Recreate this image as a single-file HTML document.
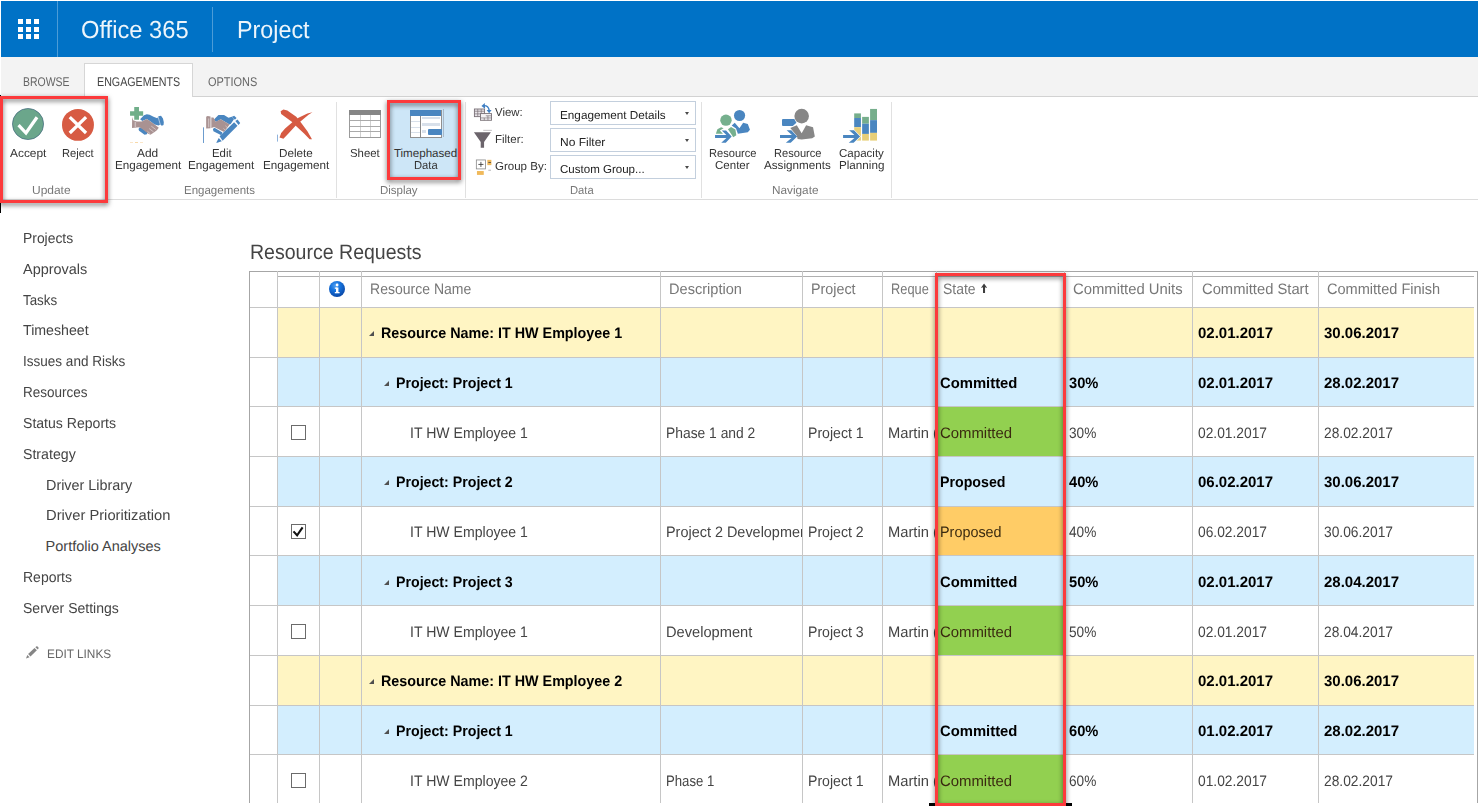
<!DOCTYPE html>
<html lang="en"><head><meta charset="utf-8"><title>Resource Requests</title>
<style>
html,body{margin:0;padding:0;background:#fff}
body{width:1478px;height:806px;position:relative;overflow:hidden;font-family:"Liberation Sans",sans-serif;text-rendering:geometricPrecision}
.a{position:absolute}
.t{position:absolute;white-space:nowrap;line-height:1;transform-origin:0 0}
.c{position:absolute;overflow:hidden}
.vl{position:absolute;width:1px;background:#c6c6c6}
.hl{position:absolute;height:1px;background:#c6c6c6}
.sep{position:absolute;width:1px;background:#e1e1e1;top:102px;height:96px}
.dd{position:absolute;left:550px;width:144px;height:22px;border:1px solid #c3cfdd;background:#fff}
.arr{position:absolute;width:0;height:0;border-left:2.8px solid transparent;border-right:2.8px solid transparent;border-top:3px solid #4a4a4a}
.cb{position:absolute;left:291px;width:13px;height:13px;border:1px solid #6b6b6b;background:#fff}
.tri{position:absolute;width:0;height:0;border-left:5.5px solid transparent;border-bottom:5.5px solid #505050}
.red{position:absolute;border:3px solid #fc3a3c;filter:drop-shadow(0 2px 2.5px rgba(0,0,0,.6))}
</style></head><body>

<div class="a" style="left:1px;top:1px;width:1477px;height:56px;background:#0072c6"></div>
<div class="a" style="left:57px;top:1px;width:1px;height:56px;background:#4c9cd7"></div>
<div class="a" style="left:212px;top:7px;width:1px;height:45px;background:#4c9cd7"></div>
<div class="a" style="left:18.3px;top:19.0px;width:5px;height:5px;background:#fff"></div>
<div class="a" style="left:25.9px;top:19.0px;width:5px;height:5px;background:#fff"></div>
<div class="a" style="left:33.5px;top:19.0px;width:5px;height:5px;background:#fff"></div>
<div class="a" style="left:18.3px;top:26.5px;width:5px;height:5px;background:#fff"></div>
<div class="a" style="left:25.9px;top:26.5px;width:5px;height:5px;background:#fff"></div>
<div class="a" style="left:33.5px;top:26.5px;width:5px;height:5px;background:#fff"></div>
<div class="a" style="left:18.3px;top:34.0px;width:5px;height:5px;background:#fff"></div>
<div class="a" style="left:25.9px;top:34.0px;width:5px;height:5px;background:#fff"></div>
<div class="a" style="left:33.5px;top:34.0px;width:5px;height:5px;background:#fff"></div>
<div class="a" style="left:1px;top:57px;width:1477px;height:40px;background:#f3f3f3"></div>
<div class="a" style="left:0;top:96px;width:1478px;height:1px;background:#d2d2d2"></div>
<div class="a" style="left:84px;top:63px;width:107px;height:33px;background:#fff;border:1px solid #d6d6d6;border-bottom:none"></div>
<div class="a" style="left:0;top:199px;width:1478px;height:1px;background:#dcdcdc"></div>
<div class="sep" style="left:336px"></div>
<div class="sep" style="left:465px"></div>
<div class="sep" style="left:701px"></div>
<div class="sep" style="left:891px"></div>
<div class="a" style="left:389px;top:102px;width:70px;height:76px;background:#cde6f7"></div>
<div class="dd" style="top:101px"></div><div class="arr" style="left:684.7px;top:112px"></div>
<div class="dd" style="top:128px"></div><div class="arr" style="left:684.7px;top:139px"></div>
<div class="dd" style="top:155px"></div><div class="arr" style="left:684.7px;top:166px"></div>
<!-- Accept -->
<svg class="a" style="left:4px;top:100px" width="100" height="50" viewBox="0 0 1478 739">
<circle cx="355" cy="355" r="230" fill="#6ba68b" stroke="#3d647a" stroke-width="10"/>
<path d="M215 372 L325 488 L488 255" fill="none" stroke="#fff" stroke-width="48"/>
<circle cx="1093" cy="368" r="236" fill="#d75b43"/>
<path d="M972 252 L1213 488 M1213 252 L972 488" fill="none" stroke="#fff" stroke-width="48"/>
</svg>
<!-- Add engagement -->
<svg class="a" style="left:120px;top:100px" width="60" height="45" viewBox="0 0 1075 806">
<path d="M360 345 L430 275 L480 255 L530 265 L600 300 L668 328 L690 290 L735 280 L770 330 L785 400 L780 450 L750 462 L720 440 L690 455 L620 440 L560 395 L480 340 L400 378 Z" fill="#4a86c0"/>
<path d="M682 300 L722 442" stroke="#dce8f4" stroke-width="12" fill="none"/>
<path d="M332 520 L352 490 L400 508 L492 580 L482 612 L440 622 L342 552 Z" fill="#4a86c0"/>
<path d="M218 305 L236 362 L300 385 L390 385 L480 340 L560 395 L620 440 L695 495 L660 540 L620 575 L545 622 L500 600 L430 540 L350 490 L300 492 L215 500 Z" fill="#a99292"/>
<path d="M262 390 L288 390 L288 490 L262 490 Z" fill="#cbbcbc"/>
<path d="M560 468 L642 530 M522 512 L602 572 M492 560 L542 606" stroke="#e9e1e1" stroke-width="11" fill="none"/>
<path d="M180 200 H255 V125 H340 V200 H415 V280 H340 V355 H255 V280 H180 Z" fill="#70ae89"/>
</svg>
<!-- Edit engagement -->
<svg class="a" style="left:195px;top:100px" width="60" height="45" viewBox="0 0 1075 806">
<rect x="144" y="490" width="16" height="280" fill="#5a90c8"/>
<path d="M340 350 L420 270 L520 270 L600 320 L660 300 L700 340 L640 430 L620 440 L460 345 L375 392 Z" fill="#4a86c0"/>
<path d="M320 520 L350 495 L492 580 L470 632 L330 560 Z" fill="#4a86c0"/>
<path d="M292 312 L330 312 L370 390 L460 345 L620 440 L520 572 L345 482 L292 500 Z" fill="#a99292"/>
<path d="M200 300 L225 286 L278 296 L278 505 L200 510 Z" fill="#a99292"/>
<path d="M232 330 L256 330 L256 488 L232 488 Z" fill="#cbbcbc"/>
<path d="M545 462 L585 500 M510 510 L548 545" stroke="#e9e1e1" stroke-width="10" fill="none"/>
<path d="M440 650 L700 400 L762 462 L495 732 Z" fill="#4a86c0"/>
<path d="M722 378 L762 350 L810 410 L780 446 Z" fill="#4a86c0"/>
<path d="M660 302 L702 280 L745 322 L715 352 Z" fill="#4a86c0"/>
<path d="M425 682 L480 737 L378 772 Z" fill="#4a86c0"/>
</svg>
<!-- Delete engagement -->
<svg class="a" style="left:265px;top:100px" width="60" height="45" viewBox="0 0 1075 806">
<rect x="215" y="620" width="15" height="125" fill="#7aa5d6"/>
<path d="M280 200 L330 170 L400 190 L560 300 L640 400 L760 560 L842 702 L800 702 L700 600 L560 470 L480 390 L290 252 Z" fill="#d65a42"/>
<path d="M260 670 L290 590 L360 510 L500 390 L600 320 L760 240 L850 220 L780 262 L640 380 L560 450 L420 600 L330 692 Z" fill="#d65a42"/>
</svg>
<!-- Sheet -->
<div class="a" style="left:349px;top:110px;width:30px;height:26px;border:1px solid #9b9b9b;background:#fff"></div>
<div class="a" style="left:349px;top:110px;width:32px;height:5px;background:#868686"></div>
<div class="a" style="left:359.5px;top:115px;width:1px;height:22px;background:#cfcfcf"></div>
<div class="a" style="left:370px;top:115px;width:1px;height:22px;background:#cfcfcf"></div>
<div class="a" style="left:350px;top:120.2px;width:30px;height:1px;background:#aaa"></div>
<div class="a" style="left:350px;top:125.8px;width:30px;height:1px;background:#aaa"></div>
<div class="a" style="left:350px;top:131.4px;width:30px;height:1px;background:#aaa"></div>
<!-- Timephased -->
<div class="a" style="left:409.7px;top:110px;width:30px;height:27px;border:1px solid #909090;border-top:none;background:#fff"></div>
<div class="a" style="left:409.7px;top:110px;width:31.5px;height:5.8px;background:#4a86c0"></div>
<div class="a" style="left:420px;top:116px;width:1px;height:21.5px;background:#888"></div>
<div class="a" style="left:421.5px;top:116.6px;width:18px;height:2.4px;background:#d8e0ea"></div>
<div class="a" style="left:421.5px;top:123.1px;width:18px;height:2.7px;background:#d8e0ea"></div>
<div class="a" style="left:421.5px;top:130px;width:4.5px;height:2.8px;background:#d8e0ea"></div>
<div class="a" style="left:411px;top:121px;width:8.5px;height:1px;background:#d8e0ea"></div>
<div class="a" style="left:411px;top:126.6px;width:8.5px;height:1px;background:#d8e0ea"></div>
<div class="a" style="left:411px;top:132.2px;width:8.5px;height:1px;background:#d8e0ea"></div>
<div class="a" style="left:427.8px;top:128.6px;width:14.3px;height:6.3px;background:#4a86c0;border-radius:1px"></div>
<div class="a" style="left:443px;top:109.3px;width:1px;height:28px;background:#a8b8c8"></div>
<!-- View icon -->
<svg class="a" style="left:468px;top:98px" width="60" height="82" viewBox="0 0 590 806">
<rect x="63" y="108" width="100" height="75" fill="#e8e4e8" stroke="#7a7278" stroke-width="9"/>
<path d="M63 130 H163 M96 108 V183 M130 108 V183 M63 156 H163" stroke="#7a7278" stroke-width="7" fill="none"/>
<rect x="123" y="153" width="108" height="66" fill="#f4f2f4" stroke="#7a7278" stroke-width="9"/>
<path d="M123 196 H231 M160 196 V219 M196 175 V219 M175 175 H231" stroke="#7a7278" stroke-width="7" fill="none"/>
<path d="M150 75 Q200 70 208 120" stroke="#3f7fc4" stroke-width="14" fill="none"/>
<path d="M183 118 L232 118 L208 150 Z" fill="#3f7fc4"/>
<path d="M132 78 L165 48 L168 105 Z" fill="#3f7fc4"/>
<!-- filter -->
<path d="M150 318 H235" stroke="#8a848a" stroke-width="5"/>
<path d="M58 336 L225 336 L158 432 L158 488 L125 488 L125 432 Z" fill="#6b646b"/>
<!-- group -->
<rect x="82" y="609" width="90" height="88" fill="#fff" stroke="#8a8a8a" stroke-width="8"/>
<path d="M102 653 H152 M127 628 V678" stroke="#333" stroke-width="8" fill="none"/>
<rect x="190" y="608" width="40" height="52" fill="#f0b95a"/>
<rect x="200" y="629" width="26" height="8" fill="#444"/>
<rect x="200" y="706" width="26" height="7" fill="#999"/>
<rect x="88" y="718" width="67" height="38" fill="#f0b95a"/>
</svg>
<!-- Resource Center -->
<svg class="a" style="left:705px;top:100px" width="90" height="50" viewBox="0 0 1451 806">
<circle cx="557" cy="250" r="90" fill="#4a86c0"/>
<path d="M430 410 L480 365 L555 455 L615 365 L690 385 L725 480 L690 520 L530 545 L500 460 Z" fill="#4a86c0"/>
<circle cx="338" cy="325" r="92" fill="#76b08e"/>
<path d="M175 545 L200 470 L260 440 L300 455 L240 490 L290 545 Z" fill="#76b08e"/>
<path d="M370 470 L420 435 L490 475 L505 570 L455 600 L430 560 Z" fill="#76b08e"/>
<path d="M162 565 L345 565 L270 490 L340 490 L430 590 L335 690 L262 690 L345 612 L162 612 Z" fill="#4a86c0"/>
</svg>
<!-- Resource Assignments + Capacity -->
<svg class="a" style="left:770px;top:100px" width="120" height="50" viewBox="0 0 1478 616">
<path d="M160 235 L300 235 L325 280 L280 320 L160 320 Q148 320 148 308 L148 247 Q148 235 160 235 Z" fill="#4a86c0"/>
<circle cx="390" cy="198" r="90" fill="#878787"/>
<path d="M250 345 L330 310 L390 410 L445 310 L530 335 L552 450 L520 470 L390 487 L340 480 L330 440 Z" fill="#878787"/>
<path d="M123 432 L270 432 L205 372 L262 372 L335 450 L255 528 L195 528 L265 468 L123 468 Z" fill="#4a86c0"/>
<rect x="1037" y="165" width="83" height="57" fill="#76ae8c"/>
<rect x="1037" y="222" width="83" height="113" fill="#4a86c0"/>
<rect x="1037" y="335" width="83" height="165" fill="#e8cf78"/>
<rect x="1135" y="208" width="83" height="84" fill="#76ae8c"/>
<rect x="1135" y="292" width="83" height="126" fill="#4a86c0"/>
<rect x="1135" y="418" width="83" height="82" fill="#e8cf78"/>
<rect x="1233" y="110" width="85" height="138" fill="#76ae8c"/>
<rect x="1233" y="248" width="85" height="157" fill="#4a86c0"/>
<rect x="1233" y="405" width="85" height="95" fill="#e8cf78"/>
<path d="M900 432 L1040 432 L975 372 L1035 372 L1110 450 L1030 528 L970 528 L1040 468 L900 468 Z" fill="#4a86c0" stroke="#fff" stroke-width="14" paint-order="stroke"/>
</svg>

<div class="a" style="left:0;top:203px;width:1px;height:10px;background:#000"></div><div class="a" style="left:0;top:95px;width:1px;height:1px;background:#000"></div>
<div class="a" style="left:130px;top:142px;width:3px;height:1px;background:#fbe6c8"></div><div class="a" style="left:135px;top:142px;width:3px;height:1px;background:#f8d9a8"></div><div class="a" style="left:140px;top:142px;width:3px;height:1px;background:#fbe6c8"></div>
<div class="a" style="left:278px;top:307px;width:1196px;height:50px;background:#fff5c3"></div>
<div class="hl" style="left:249px;top:307px;width:1225px"></div>
<div class="tri" style="left:368.6px;top:330.7px"></div>
<div class="a" style="left:278px;top:357px;width:1196px;height:49px;background:#d3eefe"></div>
<div class="hl" style="left:249px;top:357px;width:1225px"></div>
<div class="tri" style="left:383.6px;top:380.7px"></div>
<div class="a" style="left:937px;top:406px;width:127px;height:50px;background:#92d050"></div>
<div class="hl" style="left:249px;top:406px;width:1225px"></div>
<div class="cb" style="top:425px"></div>
<div class="a" style="left:278px;top:456px;width:1196px;height:50px;background:#d3eefe"></div>
<div class="hl" style="left:249px;top:456px;width:1225px"></div>
<div class="tri" style="left:383.6px;top:479.7px"></div>
<div class="a" style="left:937px;top:506px;width:127px;height:49px;background:#ffcc66"></div>
<div class="hl" style="left:249px;top:506px;width:1225px"></div>
<div class="cb" style="top:524px"></div>
<div class="a" style="left:278px;top:555px;width:1196px;height:50px;background:#d3eefe"></div>
<div class="hl" style="left:249px;top:555px;width:1225px"></div>
<div class="tri" style="left:383.6px;top:579.7px"></div>
<div class="a" style="left:937px;top:605px;width:127px;height:50px;background:#92d050"></div>
<div class="hl" style="left:249px;top:605px;width:1225px"></div>
<div class="cb" style="top:624px"></div>
<div class="a" style="left:278px;top:655px;width:1196px;height:50px;background:#fff5c3"></div>
<div class="hl" style="left:249px;top:655px;width:1225px"></div>
<div class="tri" style="left:368.6px;top:678.7px"></div>
<div class="a" style="left:278px;top:705px;width:1196px;height:49px;background:#d3eefe"></div>
<div class="hl" style="left:249px;top:705px;width:1225px"></div>
<div class="tri" style="left:383.6px;top:728.7px"></div>
<div class="a" style="left:937px;top:754px;width:127px;height:50px;background:#92d050"></div>
<div class="hl" style="left:249px;top:754px;width:1225px"></div>
<div class="cb" style="top:773px"></div>
<div class="hl" style="left:249px;top:271px;width:1229px;background:#a6a6a6"></div>
<div class="hl" style="left:278px;top:276px;width:1196px;background:#b0b0b0"></div>
<div class="vl" style="left:249px;top:271px;height:532px;background:#a6a6a6"></div>
<div class="vl" style="left:1477px;top:271px;height:532px;background:#a6a6a6"></div>
<div class="vl" style="left:277px;top:271px;height:532px"></div>
<div class="vl" style="left:319px;top:271px;height:532px"></div>
<div class="vl" style="left:361px;top:271px;height:532px"></div>
<div class="vl" style="left:660px;top:271px;height:532px"></div>
<div class="vl" style="left:802px;top:271px;height:532px"></div>
<div class="vl" style="left:882px;top:271px;height:532px"></div>
<div class="vl" style="left:936px;top:271px;height:532px"></div>
<div class="vl" style="left:1064px;top:271px;height:532px"></div>
<div class="vl" style="left:1192px;top:271px;height:532px"></div>
<div class="vl" style="left:1318px;top:271px;height:532px"></div>
<svg class="a" style="left:328px;top:280px" width="18" height="18" viewBox="0 0 18 18"><defs><radialGradient id="ig" cx="40%" cy="30%" r="70%"><stop offset="0" stop-color="#4f9ff2"/><stop offset="0.45" stop-color="#1672dc"/><stop offset="1" stop-color="#0a48a8"/></radialGradient></defs><circle cx="9" cy="9" r="8" fill="url(#ig)"/><rect x="8" y="7.5" width="2.4" height="5.5" fill="#fff"/><rect x="6.8" y="7.5" width="2" height="1.3" fill="#fff"/><rect x="6.8" y="12" width="4.8" height="1.3" fill="#fff"/><circle cx="9.1" cy="5" r="1.4" fill="#fff"/></svg>
<svg class="a" style="left:292px;top:523px" width="14" height="14" viewBox="0 0 14 14"><path d="M1.5 8.4 L5.1 12.3 L10.6 4.4" fill="none" stroke="#111" stroke-width="2.1"/></svg>
<svg class="a" style="left:980px;top:283px" width="8" height="11" viewBox="0 0 8 11"><path d="M4.05 0.6 L7.1 4.8 L5.7 4.7 L5.05 3.8 L5.05 10 L3.0 10 L3.0 3.8 L2.4 4.7 L1.0 4.8 Z" fill="#3c3c3c"/></svg>
<svg class="a" style="left:15px;top:635px" width="110" height="35" viewBox="0 0 1478 470"><path d="M176 256 L262 174 L294 206 L208 288 Z" fill="#858585"/><path d="M274 164 Q292 142 312 162 Q326 180 306 196 Z" fill="#858585"/><path d="M165 268 L196 298 L148 314 Z" fill="#858585"/></svg>
<span class="t" style="left:81.0px;top:19.0px;font-size:24.6px;color:rgba(255,255,255,.93);transform:scaleX(0.964);">Office 365</span>
<span class="t" style="left:237.0px;top:19.0px;font-size:24.6px;color:rgba(255,255,255,.93);transform:scaleX(0.948);">Project</span>
<span class="t" style="left:23.1px;top:76.0px;font-size:12.6px;color:#666;transform:scaleX(0.831);">BROWSE</span>
<span class="t" style="left:97.2px;top:76.0px;font-size:12.6px;color:#444;transform:scaleX(0.849);">ENGAGEMENTS</span>
<span class="t" style="left:208.0px;top:76.0px;font-size:12.6px;color:#666;transform:scaleX(0.870);">OPTIONS</span>
<span class="t" style="left:10.1px;top:148.0px;font-size:11.6px;color:#333;transform:scaleX(1.027);">Accept</span>
<span class="t" style="left:62.2px;top:148.0px;font-size:11.6px;color:#333;transform:scaleX(0.964);">Reject</span>
<span class="t" style="left:136.9px;top:148.0px;font-size:11.6px;color:#333;transform:scaleX(1.027);">Add</span>
<span class="t" style="left:114.7px;top:160.0px;font-size:11.6px;color:#333;transform:scaleX(1.008);">Engagement</span>
<span class="t" style="left:211.8px;top:148.0px;font-size:11.6px;color:#333;transform:scaleX(0.981);">Edit</span>
<span class="t" style="left:188.3px;top:160.0px;font-size:11.6px;color:#333;transform:scaleX(1.008);">Engagement</span>
<span class="t" style="left:278.6px;top:148.0px;font-size:11.6px;color:#333;transform:scaleX(1.008);">Delete</span>
<span class="t" style="left:262.5px;top:160.0px;font-size:11.6px;color:#333;transform:scaleX(1.008);">Engagement</span>
<span class="t" style="left:350.3px;top:148.0px;font-size:11.6px;color:#333;transform:scaleX(0.980);">Sheet</span>
<span class="t" style="left:393.9px;top:148.0px;font-size:11.6px;color:#333;">Timephased</span>
<span class="t" style="left:413.7px;top:160.0px;font-size:11.6px;color:#333;transform:scaleX(0.967);">Data</span>
<span class="t" style="left:709.0px;top:148.0px;font-size:11.6px;color:#333;transform:scaleX(0.957);">Resource</span>
<span class="t" style="left:715.4px;top:160.0px;font-size:11.6px;color:#333;transform:scaleX(0.994);">Center</span>
<span class="t" style="left:774.1px;top:148.0px;font-size:11.6px;color:#333;transform:scaleX(0.957);">Resource</span>
<span class="t" style="left:764.4px;top:160.0px;font-size:11.6px;color:#333;transform:scaleX(1.006);">Assignments</span>
<span class="t" style="left:838.8px;top:148.0px;font-size:11.6px;color:#333;transform:scaleX(0.995);">Capacity</span>
<span class="t" style="left:838.8px;top:160.0px;font-size:11.6px;color:#333;transform:scaleX(1.006);">Planning</span>
<span class="t" style="left:32.1px;top:185.0px;font-size:11.6px;color:#777;transform:scaleX(1.032);">Update</span>
<span class="t" style="left:184.4px;top:185.0px;font-size:11.6px;color:#777;transform:scaleX(0.992);">Engagements</span>
<span class="t" style="left:380.4px;top:185.0px;font-size:11.6px;color:#777;transform:scaleX(0.989);">Display</span>
<span class="t" style="left:569.6px;top:185.0px;font-size:11.6px;color:#777;transform:scaleX(0.967);">Data</span>
<span class="t" style="left:771.7px;top:185.0px;font-size:11.6px;color:#777;transform:scaleX(1.016);">Navigate</span>
<span class="t" style="left:495.4px;top:107.0px;font-size:11.6px;color:#333;transform:scaleX(0.984);">View:</span>
<span class="t" style="left:495.4px;top:134.0px;font-size:11.6px;color:#333;transform:scaleX(0.990);">Filter:</span>
<span class="t" style="left:495.4px;top:161.0px;font-size:11.6px;color:#333;transform:scaleX(0.994);">Group By:</span>
<span class="t" style="left:559.8px;top:110.0px;font-size:11.6px;color:#222;transform:scaleX(1.012);">Engagement Details</span>
<span class="t" style="left:559.8px;top:137.0px;font-size:11.6px;color:#222;transform:scaleX(1.034);">No Filter</span>
<span class="t" style="left:559.8px;top:164.0px;font-size:11.6px;color:#222;transform:scaleX(0.995);">Custom Group...</span>
<span class="t" style="left:23.3px;top:232.0px;font-size:14.5px;color:#444;transform:scaleX(0.958);">Projects</span>
<span class="t" style="left:23.3px;top:263.0px;font-size:14.5px;color:#444;transform:scaleX(0.996);">Approvals</span>
<span class="t" style="left:23.3px;top:294.0px;font-size:14.5px;color:#444;transform:scaleX(0.920);">Tasks</span>
<span class="t" style="left:23.3px;top:324.0px;font-size:14.5px;color:#444;transform:scaleX(0.978);">Timesheet</span>
<span class="t" style="left:23.3px;top:355.0px;font-size:14.5px;color:#444;transform:scaleX(0.933);">Issues and Risks</span>
<span class="t" style="left:23.3px;top:386.0px;font-size:14.5px;color:#444;transform:scaleX(0.931);">Resources</span>
<span class="t" style="left:23.3px;top:417.0px;font-size:14.5px;color:#444;transform:scaleX(0.970);">Status Reports</span>
<span class="t" style="left:23.3px;top:448.0px;font-size:14.5px;color:#444;transform:scaleX(0.976);">Strategy</span>
<span class="t" style="left:45.6px;top:479.0px;font-size:14.5px;color:#444;transform:scaleX(0.991);">Driver Library</span>
<span class="t" style="left:45.6px;top:509.0px;font-size:14.5px;color:#444;transform:scaleX(1.016);">Driver Prioritization</span>
<span class="t" style="left:45.6px;top:540.0px;font-size:14.5px;color:#444;">Portfolio Analyses</span>
<span class="t" style="left:23.3px;top:571.0px;font-size:14.5px;color:#444;transform:scaleX(0.965);">Reports</span>
<span class="t" style="left:23.3px;top:602.0px;font-size:14.5px;color:#444;transform:scaleX(0.966);">Server Settings</span>
<span class="t" style="left:47.0px;top:648.0px;font-size:12.2px;color:#666;transform:scaleX(0.970);">EDIT LINKS</span>
<span class="t" style="left:249.6px;top:243.0px;font-size:20.9px;color:#444;transform:scaleX(0.935);">Resource Requests</span>
<span class="t" style="left:369.8px;top:282.0px;font-size:15.1px;color:#777;transform:scaleX(0.929);">Resource Name</span>
<span class="t" style="left:669.2px;top:282.0px;font-size:15.1px;color:#777;transform:scaleX(0.966);">Description</span>
<span class="t" style="left:811.2px;top:282.0px;font-size:15.1px;color:#777;transform:scaleX(0.949);">Project</span>
<div class="c" style="left:882.4px;top:282.0px;width:46.9px;height:19.6px"><span class="t" style="left:8.6px;top:0;font-size:15.1px;color:#777;transform:scaleX(0.849);">Requested</span></div>
<span class="t" style="left:943.3px;top:282.0px;font-size:15.1px;color:#777;transform:scaleX(0.925);">State</span>
<span class="t" style="left:1072.6px;top:282.0px;font-size:15.1px;color:#777;transform:scaleX(0.983);">Committed Units</span>
<span class="t" style="left:1201.5px;top:282.0px;font-size:15.1px;color:#777;transform:scaleX(0.978);">Committed Start</span>
<span class="t" style="left:1326.9px;top:282.0px;font-size:15.1px;color:#777;transform:scaleX(0.964);">Committed Finish</span>
<span class="t" style="left:381.2px;top:326.0px;font-size:15.1px;color:#000;font-weight:bold;transform:scaleX(0.949);">Resource Name: IT HW Employee 1</span>
<span class="t" style="left:1197.7px;top:326.0px;font-size:15.1px;color:#000;font-weight:bold;transform:scaleX(0.993);">02.01.2017</span>
<span class="t" style="left:1323.6px;top:326.0px;font-size:15.1px;color:#000;font-weight:bold;transform:scaleX(0.993);">30.06.2017</span>
<span class="t" style="left:395.8px;top:376.0px;font-size:15.1px;color:#000;font-weight:bold;transform:scaleX(0.940);">Project: Project 1</span>
<span class="t" style="left:940.1px;top:376.0px;font-size:15.1px;color:#000;font-weight:bold;transform:scaleX(0.982);">Committed</span>
<span class="t" style="left:1069.0px;top:376.0px;font-size:15.1px;color:#000;font-weight:bold;transform:scaleX(0.973);">30%</span>
<span class="t" style="left:1197.7px;top:376.0px;font-size:15.1px;color:#000;font-weight:bold;transform:scaleX(0.993);">02.01.2017</span>
<span class="t" style="left:1323.6px;top:376.0px;font-size:15.1px;color:#000;font-weight:bold;transform:scaleX(0.993);">28.02.2017</span>
<span class="t" style="left:410.3px;top:426.0px;font-size:15.1px;color:#444;transform:scaleX(0.933);">IT HW Employee 1</span>
<div class="c" style="left:660.6px;top:426.0px;width:141.7px;height:19.6px"><span class="t" style="left:5.6px;top:0;font-size:15.1px;color:#444;transform:scaleX(0.917);">Phase 1 and 2</span></div>
<span class="t" style="left:808.2px;top:426.0px;font-size:15.1px;color:#444;transform:scaleX(0.935);">Project 1</span>
<div class="c" style="left:882.4px;top:426.0px;width:52.6px;height:19.6px"><span class="t" style="left:5.3px;top:0;font-size:15.1px;color:#444;transform:scaleX(0.975);">Martin (</span></div>
<span class="t" style="left:940.1px;top:426.0px;font-size:15.1px;color:#3a2a10;transform:scaleX(0.987);">Committed</span>
<span class="t" style="left:1069.0px;top:426.0px;font-size:15.1px;color:#444;transform:scaleX(0.903);">30%</span>
<span class="t" style="left:1197.7px;top:426.0px;font-size:15.1px;color:#444;transform:scaleX(0.913);">02.01.2017</span>
<span class="t" style="left:1323.6px;top:426.0px;font-size:15.1px;color:#444;transform:scaleX(0.913);">28.02.2017</span>
<span class="t" style="left:395.8px;top:475.0px;font-size:15.1px;color:#000;font-weight:bold;transform:scaleX(0.940);">Project: Project 2</span>
<span class="t" style="left:940.1px;top:475.0px;font-size:15.1px;color:#000;font-weight:bold;transform:scaleX(0.941);">Proposed</span>
<span class="t" style="left:1069.0px;top:475.0px;font-size:15.1px;color:#000;font-weight:bold;transform:scaleX(0.973);">40%</span>
<span class="t" style="left:1197.7px;top:475.0px;font-size:15.1px;color:#000;font-weight:bold;transform:scaleX(0.993);">06.02.2017</span>
<span class="t" style="left:1323.6px;top:475.0px;font-size:15.1px;color:#000;font-weight:bold;transform:scaleX(0.993);">30.06.2017</span>
<span class="t" style="left:410.3px;top:525.0px;font-size:15.1px;color:#444;transform:scaleX(0.933);">IT HW Employee 1</span>
<div class="c" style="left:660.6px;top:525.0px;width:141.7px;height:19.6px"><span class="t" style="left:5.6px;top:0;font-size:15.1px;color:#444;transform:scaleX(0.956);">Project 2 Development</span></div>
<span class="t" style="left:808.2px;top:525.0px;font-size:15.1px;color:#444;transform:scaleX(0.935);">Project 2</span>
<div class="c" style="left:882.4px;top:525.0px;width:52.6px;height:19.6px"><span class="t" style="left:5.3px;top:0;font-size:15.1px;color:#444;transform:scaleX(0.975);">Martin (</span></div>
<span class="t" style="left:940.1px;top:525.0px;font-size:15.1px;color:#3a2a10;transform:scaleX(0.953);">Proposed</span>
<span class="t" style="left:1069.0px;top:525.0px;font-size:15.1px;color:#444;transform:scaleX(0.903);">40%</span>
<span class="t" style="left:1197.7px;top:525.0px;font-size:15.1px;color:#444;transform:scaleX(0.913);">06.02.2017</span>
<span class="t" style="left:1323.6px;top:525.0px;font-size:15.1px;color:#444;transform:scaleX(0.913);">30.06.2017</span>
<span class="t" style="left:395.8px;top:575.0px;font-size:15.1px;color:#000;font-weight:bold;transform:scaleX(0.940);">Project: Project 3</span>
<span class="t" style="left:940.1px;top:575.0px;font-size:15.1px;color:#000;font-weight:bold;transform:scaleX(0.982);">Committed</span>
<span class="t" style="left:1069.0px;top:575.0px;font-size:15.1px;color:#000;font-weight:bold;transform:scaleX(0.973);">50%</span>
<span class="t" style="left:1197.7px;top:575.0px;font-size:15.1px;color:#000;font-weight:bold;transform:scaleX(0.993);">02.01.2017</span>
<span class="t" style="left:1323.6px;top:575.0px;font-size:15.1px;color:#000;font-weight:bold;transform:scaleX(0.993);">28.04.2017</span>
<span class="t" style="left:410.3px;top:625.0px;font-size:15.1px;color:#444;transform:scaleX(0.933);">IT HW Employee 1</span>
<div class="c" style="left:660.6px;top:625.0px;width:141.7px;height:19.6px"><span class="t" style="left:5.6px;top:0;font-size:15.1px;color:#444;transform:scaleX(0.970);">Development</span></div>
<span class="t" style="left:808.2px;top:625.0px;font-size:15.1px;color:#444;transform:scaleX(0.935);">Project 3</span>
<div class="c" style="left:882.4px;top:625.0px;width:52.6px;height:19.6px"><span class="t" style="left:5.3px;top:0;font-size:15.1px;color:#444;transform:scaleX(0.975);">Martin (</span></div>
<span class="t" style="left:940.1px;top:625.0px;font-size:15.1px;color:#3a2a10;transform:scaleX(0.987);">Committed</span>
<span class="t" style="left:1069.0px;top:625.0px;font-size:15.1px;color:#444;transform:scaleX(0.903);">50%</span>
<span class="t" style="left:1197.7px;top:625.0px;font-size:15.1px;color:#444;transform:scaleX(0.913);">02.01.2017</span>
<span class="t" style="left:1323.6px;top:625.0px;font-size:15.1px;color:#444;transform:scaleX(0.913);">28.04.2017</span>
<span class="t" style="left:381.2px;top:674.0px;font-size:15.1px;color:#000;font-weight:bold;transform:scaleX(0.949);">Resource Name: IT HW Employee 2</span>
<span class="t" style="left:1197.7px;top:674.0px;font-size:15.1px;color:#000;font-weight:bold;transform:scaleX(0.993);">02.01.2017</span>
<span class="t" style="left:1323.6px;top:674.0px;font-size:15.1px;color:#000;font-weight:bold;transform:scaleX(0.993);">30.06.2017</span>
<span class="t" style="left:395.8px;top:724.0px;font-size:15.1px;color:#000;font-weight:bold;transform:scaleX(0.940);">Project: Project 1</span>
<span class="t" style="left:940.1px;top:724.0px;font-size:15.1px;color:#000;font-weight:bold;transform:scaleX(0.982);">Committed</span>
<span class="t" style="left:1069.0px;top:724.0px;font-size:15.1px;color:#000;font-weight:bold;transform:scaleX(0.973);">60%</span>
<span class="t" style="left:1197.7px;top:724.0px;font-size:15.1px;color:#000;font-weight:bold;transform:scaleX(0.993);">01.02.2017</span>
<span class="t" style="left:1323.6px;top:724.0px;font-size:15.1px;color:#000;font-weight:bold;transform:scaleX(0.993);">28.02.2017</span>
<span class="t" style="left:410.3px;top:774.0px;font-size:15.1px;color:#444;transform:scaleX(0.933);">IT HW Employee 2</span>
<div class="c" style="left:660.6px;top:774.0px;width:141.7px;height:19.6px"><span class="t" style="left:5.6px;top:0;font-size:15.1px;color:#444;transform:scaleX(0.872);">Phase 1</span></div>
<span class="t" style="left:808.2px;top:774.0px;font-size:15.1px;color:#444;transform:scaleX(0.935);">Project 1</span>
<div class="c" style="left:882.4px;top:774.0px;width:52.6px;height:19.6px"><span class="t" style="left:5.3px;top:0;font-size:15.1px;color:#444;transform:scaleX(0.975);">Martin (</span></div>
<span class="t" style="left:940.1px;top:774.0px;font-size:15.1px;color:#3a2a10;transform:scaleX(0.987);">Committed</span>
<span class="t" style="left:1069.0px;top:774.0px;font-size:15.1px;color:#444;transform:scaleX(0.903);">60%</span>
<span class="t" style="left:1197.7px;top:774.0px;font-size:15.1px;color:#444;transform:scaleX(0.913);">01.02.2017</span>
<span class="t" style="left:1323.6px;top:774.0px;font-size:15.1px;color:#444;transform:scaleX(0.913);">28.02.2017</span>
<div class="red" style="left:0px;top:96px;width:102px;height:101px"></div>
<div class="red" style="left:387px;top:100px;width:68px;height:74px"></div>
<div class="a" style="left:929px;top:803px;width:143px;height:3px;background:#000"></div>
<div class="red" style="left:935px;top:273px;width:125px;height:527px"></div>
</body></html>
